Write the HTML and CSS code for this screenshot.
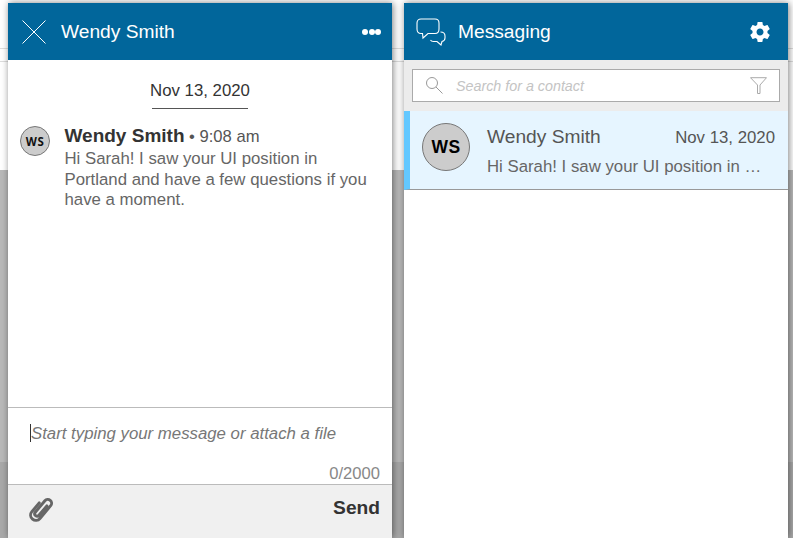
FILE: index.html
```html
<!DOCTYPE html>
<html lang="en">
<head>
  <meta charset="UTF-8">
  <title>Messaging</title>
  <link rel="stylesheet" href="styles.css">
</head>
<body>

  <div class="backdrop">
    <div class="backdrop-top"><div class="backdrop-strip"></div></div>
    <div class="backdrop-mid"></div>
    <div class="backdrop-low"></div>
  </div>

  <div class="panels">

    <section class="panel chat">
      <header class="panel-head">
        <svg class="icon-close" width="26" height="26" viewBox="0 0 26 26" fill="none" stroke="#fff" stroke-width="1">
          <path d="M1.5 1.5 L24.5 24.5 M24.5 1.5 L1.5 24.5" />
        </svg>
        <div class="head-title">Wendy Smith</div>
        <div class="dots"><span></span><span></span><span></span></div>
      </header>

      <div class="thread">
        <div class="date-row"><span class="date-label">Nov 13, 2020</span></div>
        <div class="message">
          <div class="avatar avatar-small">WS</div>
          <div class="message-body">
            <div class="message-meta"><b>Wendy Smith</b> • 9:08 am</div>
            <div class="message-text">Hi Sarah! I saw your UI position in Portland and have a few questions if you have a moment.</div>
          </div>
        </div>
      </div>

      <div class="composer">
        <div class="composer-input"><span class="caret"></span>Start typing your message or attach a file</div>
        <div class="counter">0/2000</div>
      </div>

      <footer class="chat-foot">
        <svg class="icon-clip" width="30" height="32" viewBox="0 0 30 32" fill="none" stroke="#666" stroke-width="3.3" stroke-linecap="round">
          <path transform="translate(15 16) rotate(40) scale(.88) translate(-7.7 -16)" d="M10.5 9 V23 A2.7 2.7 0 0 1 5.1 23 V6 A4.3 4.3 0 0 1 13.7 6 V25 A6 6 0 0 1 1.7 25 V12" />
        </svg>
        <button class="send-btn">Send</button>
      </footer>
    </section>

    <section class="panel contacts">
      <header class="panel-head">
        <svg class="icon-bubbles" width="32" height="28" viewBox="0 0 32 28" fill="none" stroke="#fff" stroke-width="1.1">
          <path d="M5 1 H19 C21.5 1 23 2.5 23 5 V11 C23 14 21.5 15.5 19 15.5 H12 L7 20 L6.5 15.5 H5 C2.5 15.5 1 14 1 11 V5 C1 2.5 2.5 1 5 1 Z" />
          <path d="M24.5 14 C27.5 14 29 15.5 29 18 V20 C29 22 28 23 26 23.5 L25 27 L21 23.5 H17.5 C16 23.5 15 23 14.5 22" />
        </svg>
        <div class="head-title">Messaging</div>
        <svg class="icon-gear" width="24" height="24" viewBox="0 0 24 24" fill="#fff">
          <path d="M19.43 12.98c.04-.32.07-.64.07-.98s-.03-.66-.07-.98l2.11-1.65c.19-.15.24-.42.12-.64l-2-3.46c-.12-.22-.39-.3-.61-.22l-2.49 1c-.52-.4-1.08-.73-1.69-.98l-.38-2.65C14.46 2.18 14.25 2 14 2h-4c-.25 0-.46.18-.49.42l-.38 2.65c-.61.25-1.17.59-1.69.98l-2.49-1c-.23-.09-.49 0-.61.22l-2 3.46c-.13.22-.07.49.12.64l2.11 1.65c-.04.32-.07.65-.07.98s.03.66.07.98l-2.11 1.65c-.19.15-.24.42-.12.64l2 3.46c.12.22.39.3.61.22l2.49-1c.52.4 1.08.73 1.69.98l.38 2.65c.03.24.24.42.49.42h4c.25 0 .46-.18.49-.42l.38-2.65c.61-.25 1.17-.59 1.69-.98l2.49 1c.23.09.49 0 .61-.22l2-3.46c.12-.22.07-.49-.12-.64l-2.11-1.65zM12 15.5c-1.93 0-3.5-1.57-3.5-3.5s1.57-3.5 3.5-3.5 3.5 1.57 3.5 3.5-1.57 3.5-3.5 3.5z" />
        </svg>
      </header>

      <div class="search-bar">
        <div class="search-box">
          <svg class="icon-search" width="18" height="19" viewBox="0 0 18 19" fill="none" stroke="#999" stroke-width="1">
            <circle cx="7" cy="7" r="5.5" />
            <path d="M11 11 L17.5 17.5" />
          </svg>
          <span class="search-placeholder">Search for a contact</span>
          <svg class="icon-filter" width="17" height="17" viewBox="0 0 17 17" fill="none" stroke="#aaa" stroke-width="1">
            <path d="M.5 .7 H16.5 L10 8 V16.5 H7.5 V8 Z" />
          </svg>
        </div>
      </div>

      <div class="contact-row">
        <div class="avatar avatar-big">WS</div>
        <div class="contact-info">
          <div class="contact-top">
            <span class="contact-name">Wendy Smith</span>
            <span class="contact-date">Nov 13, 2020</span>
          </div>
          <div class="contact-preview">Hi Sarah! I saw your UI position in …</div>
        </div>
      </div>
    </section>

  </div>

</body>
</html>
```

FILE: styles.css
```css
* {
  box-sizing: border-box;
}

body {
  margin: 0;
  height: 538px;
  overflow: hidden;
  position: relative;
  font-family: "Liberation Sans", Arial, sans-serif;
  color: #333;
}

/* page dimmed behind the two panels */
.backdrop {
  position: absolute;
  inset: 0;
  display: flex;
  flex-direction: column;
}

.backdrop-top {
  height: 170px;
  padding-top: 48px;
  background: #fff;
}

.backdrop-strip {
  height: 14px;
  border-top: 1px solid #ddd;
  border-bottom: 1px solid #ddd;
}

.backdrop-mid {
  height: 292px;
  background: #b9b9b9;
}

.backdrop-low {
  flex: 1;
  background: #a9a9a9;
}

.panels {
  position: relative;
  display: flex;
  gap: 12px;
  height: 100%;
  padding: 3px 5px 0 8px;
}

.panel {
  width: 384px;
  display: flex;
  flex-direction: column;
  background: #fff;
  box-shadow: 1px 0 7px rgba(0, 0, 0, 0.5);
}

.panel-head {
  height: 57px;
  flex: none;
  display: flex;
  align-items: center;
  background: #01669b;
  color: #fff;
}

.head-title {
  flex: 1;
  font-size: 19.2px;
}

/* left panel */
.icon-close {
  margin: 0 14px 0 13px;
}

.dots {
  display: flex;
  gap: 0.5px;
  margin-right: 11px;
}

.dots span {
  width: 6px;
  height: 6px;
  border-radius: 50%;
  background: #fff;
}

.thread {
  flex: 1;
  padding: 21px 12px 0 12px;
}

.date-row {
  display: flex;
  justify-content: center;
}

.date-label {
  width: 96px;
  padding-bottom: 7px;
  border-bottom: 1px solid #555;
  display: flex;
  justify-content: center;
  font-size: 16.8px;
  white-space: nowrap;
}

.message {
  display: flex;
  margin-top: 17px;
}

.avatar {
  flex: none;
  display: flex;
  align-items: center;
  justify-content: center;
  border-radius: 50%;
  border: 1px solid #777;
  background: #ccc;
  color: #111;
  font-weight: bold;
}

.avatar-small {
  width: 30px;
  height: 30px;
  font-size: 11.5px;
  letter-spacing: 0.5px;
  font-family: "Open Sans", sans-serif;
}

.message-body {
  margin: -1px 0 0 14.5px;
  width: 312px;
}

.message-meta {
  font-size: 16.6px;
  color: #555;
  line-height: 21px;
}

.message-meta b {
  font-size: 19px;
  color: #333;
}

.message-text {
  margin-top: 2px;
  font-size: 16.8px;
  line-height: 20.5px;
  color: #666;
}

.composer {
  height: 77px;
  flex: none;
  border-top: 1px solid #bbb;
  padding: 16px 12px 0 22px;
  display: flex;
  flex-direction: column;
}

.composer-input {
  flex: 1;
  font-size: 16.8px;
  font-style: italic;
  color: #777;
  line-height: 19px;
}

.caret {
  display: inline-block;
  width: 1px;
  height: 18px;
  background: #333;
  vertical-align: top;
}

.counter {
  align-self: flex-end;
  font-size: 16.6px;
  color: #888;
  line-height: 19px;
  margin-bottom: 1px;
}

.chat-foot {
  height: 54px;
  flex: none;
  display: flex;
  justify-content: space-between;
  align-items: flex-start;
  background: #f0f0f0;
  border-top: 1px solid #bbb;
  padding: 8px 12px 0 18px;
}

.send-btn {
  border: none;
  background: none;
  padding: 4px 0 0;
  font-family: inherit;
  font-size: 19.2px;
  font-weight: bold;
  color: #333;
}

/* right panel */
.contacts .panel-head {
  padding-right: 16px;
}

.icon-bubbles {
  margin: 0 10px 0 12px;
}

.search-bar {
  flex: none;
  height: 51px;
  padding: 9px 8px 0;
  background: #ececec;
}

.search-box {
  height: 33px;
  display: flex;
  align-items: center;
  border: 1px solid #aaa;
  background: #fff;
  padding: 0 12px;
}

.search-placeholder {
  flex: 1;
  margin-left: 13px;
  font-size: 14.3px;
  font-style: italic;
  color: #c4c4c4;
}

.contact-row {
  flex: none;
  height: 79px;
  display: flex;
  align-items: flex-start;
  background: #e6f5ff;
  border-left: 6px solid #63c8ff;
  border-bottom: 1px solid #999;
  padding: 12px 13px 0 12px;
}

.avatar-big {
  width: 48px;
  height: 48px;
  font-size: 17.5px;
  letter-spacing: 0.5px;
  color: #000;
}

.contact-info {
  flex: 1;
  min-width: 0;
  margin-left: 17px;
  padding-top: 3px;
}

.contact-top {
  display: flex;
  justify-content: space-between;
  align-items: baseline;
  color: #555;
}

.contact-name {
  font-size: 19.2px;
}

.contact-date {
  font-size: 16.8px;
}

.contact-preview {
  margin-top: 9px;
  font-size: 16.8px;
  color: #666;
  white-space: nowrap;
}
```
